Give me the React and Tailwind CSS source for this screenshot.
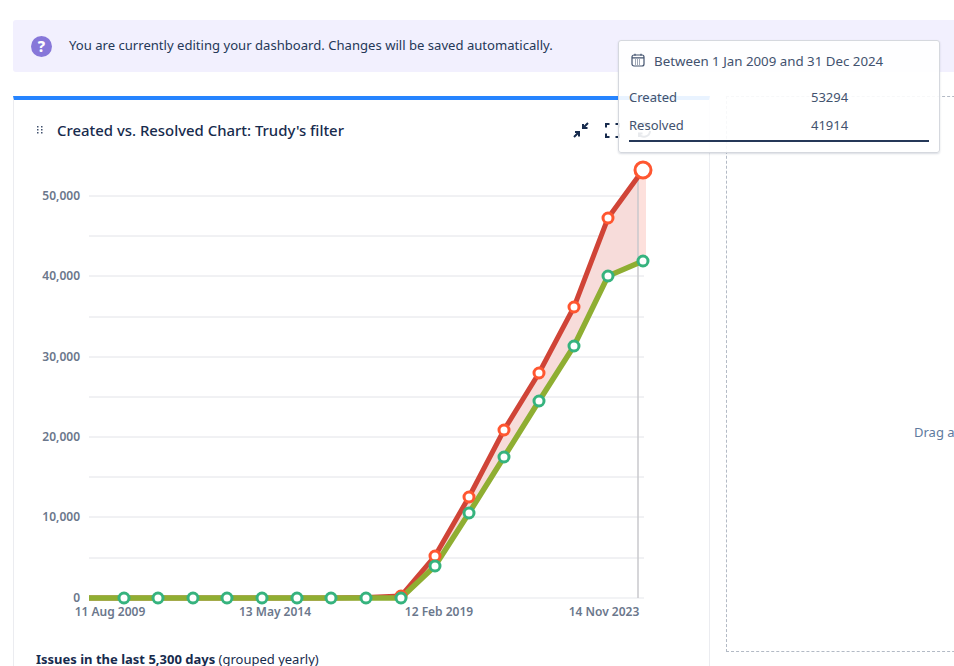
import React from 'react';

const FONT = 'font-["Noto_Sans","Open_Sans",sans-serif]';

const xs = [124, 158, 193, 227, 262, 297, 331, 366, 401, 435, 469, 504, 539, 574, 608, 643];
const created = [598, 598, 598, 598, 598, 598, 598, 597.5, 596, 556, 497, 430, 373, 307, 218, 170];
const resolved = [598, 598, 598, 598, 598, 598, 598, 598, 598, 566, 513, 457, 401, 346, 276, 261];

const toPoints = (ys) => ys.map((y, i) => `${xs[i]},${y}`).join(' ');

const gridY = [196, 236, 276, 317, 357, 397, 437, 477, 517, 558];
const yLabels = [
  { y: 196, text: '50,000' },
  { y: 276, text: '40,000' },
  { y: 357, text: '30,000' },
  { y: 437, text: '20,000' },
  { y: 517, text: '10,000' },
  { y: 598, text: '0' },
];
const xLabels = [
  { x: 110, text: '11 Aug 2009' },
  { x: 275, text: '13 May 2014' },
  { x: 439, text: '12 Feb 2019' },
  { x: 604, text: '14 Nov 2023' },
];

// Chart keeps the page's coordinates, shifted by the card's offset
function Chart() {
  return (
    <svg width="697" height="470" viewBox="13 160 697 470" className="block">
      {gridY.map((y) => (
        <line key={y} x1="89" x2="644" y1={y} y2={y} stroke="#e2e3e8" strokeWidth="1" />
      ))}
      <line x1="89" x2="644" y1="598" y2="598" stroke="#eeeff2" strokeWidth="1.5" />
      <polygon
        points={`${toPoints(created)} ${[...xs].reverse().map((x, i) => `${x},${[...resolved].reverse()[i]}`).join(' ')}`}
        fill="#f7dcda"
      />
      <rect x="638" y="172" width="8" height="90" fill="#fde0dc" />
      <line x1="638" x2="638" y1="178" y2="598" stroke="#c8c9cc" strokeWidth="1.5" />
      <polyline points={`89,598 ${toPoints(created)}`} fill="none" stroke="#d04437" strokeWidth="5" />
      <polyline points={`89,598 ${toPoints(resolved)}`} fill="none" stroke="#8fae32" strokeWidth="5.500" />
      {xs.map((x, i) => (i >= 8 && i < 15 ? (
        <circle key={x} cx={x} cy={created[i]} r="5" fill="#fff" stroke="#ff5630" strokeWidth="3" />
      ) : null))}
      <circle cx="643" cy="170" r="8" fill="#fff" stroke="#ff5630" strokeWidth="3" />
      {xs.map((x, i) => (
        <circle key={x} cx={x} cy={resolved[i]} r="5" fill="#fff" stroke="#36b37e" strokeWidth="3" />
      ))}
      {yLabels.map((l) => (
        <text key={l.y} x="80" y={l.y + 4} textAnchor="end" fontSize="12" fontWeight="600" fill="#6b778c">{l.text}</text>
      ))}
      {xLabels.map((l) => (
        <text key={l.x} x={l.x} y="616" textAnchor="middle" fontSize="12" fontWeight="600" fill="#6b778c">{l.text}</text>
      ))}
    </svg>
  );
}

function DragHandle() {
  return (
    <svg width="8" height="10" viewBox="0 0 8 10" className="shrink-0" fill="#42526e">
      {[1, 4, 7].map((y) => (
        <g key={y}>
          <rect x="1" y={y} width="1.5" height="1.5" />
          <rect x="5" y={y} width="1.5" height="1.5" />
        </g>
      ))}
    </svg>
  );
}

function CompressIcon() {
  return (
    <svg width="16" height="16" viewBox="0 0 16 16" fill="none" stroke="#172b4d" strokeWidth="2">
      <path d="M15 1l-5 5M10 2v4h4.500" />
      <path d="M1 15l5-5M2 10h4v4.500" />
    </svg>
  );
}

function ExpandIcon() {
  return (
    <svg width="15" height="15" viewBox="0 0 15 15" fill="none" stroke="#172b4d" strokeWidth="2">
      <path d="M1 4.500V1h3.500M10.500 1H14v3.500M14 10.500V14h-3.500M4.500 14H1v-3.500" />
    </svg>
  );
}

function RefreshIcon() {
  return (
    <svg width="16" height="16" viewBox="0 0 16 16" fill="none" stroke="#172b4d" strokeWidth="2">
      <path d="M14 9a6 6 0 0 1-11 3M2 7a6 6 0 0 1 11-3" />
      <path d="M13 1v3.500h-3.500M3 15v-3.500h3.500" />
    </svg>
  );
}

function CalendarIcon() {
  return (
    <svg width="14" height="14" viewBox="0 0 14 14" fill="none" stroke="#42526e" strokeWidth="1.2" className="-mt-[3px]">
      <rect x="1" y="2" width="12" height="11" rx="2" />
      <path d="M1 4.800h12M4 .8v2M10 .8v2" />
      <path d="M4 7h6M4 9h6M4 11h6" strokeWidth="1" strokeDasharray="1 1" />
    </svg>
  );
}

function HelpIcon() {
  return (
    <span className="flex h-[21px] w-[21px] shrink-0 items-center justify-center rounded-full bg-[#8777d9] text-[15px] font-extrabold leading-none text-white">
      ?
    </span>
  );
}

export default function App() {
  return (
    <div className={`relative h-[666px] w-[954px] overflow-hidden bg-white pl-[13px] pt-[20px] ${FONT}`}>
      {/* Edit banner */}
      <div className="flex h-[52px] items-center gap-[17px] rounded-l-[3px] bg-[#f2f0fe] pl-[18px]">
        <HelpIcon />
        <p className="text-[13.1px] text-[#253858]">
          You are currently editing your dashboard. Changes will be saved automatically.
        </p>
      </div>

      <div className="mt-[24px] flex items-start">
        {/* Gadget card */}
        <div className="h-[600px] w-[697px] shrink-0 border-x border-[#ebecf0] border-t-4 border-t-[#2684ff]">
          <div className="flex h-[60px] items-center pl-[22px] pr-[57px]">
            <DragHandle />
            <h2 className="ml-[13px] text-[14.9px] font-medium text-[#172b4d]">
              Created vs. Resolved Chart: Trudy's filter
            </h2>
            <div className="ml-auto flex items-center gap-[16px]">
              <CompressIcon />
              <ExpandIcon />
              <RefreshIcon />
            </div>
          </div>
          <div className="-ml-px">
            <Chart />
          </div>
          <p className="mt-[20px] pl-[22px] text-[13px] text-[#172b4d]">
            <b className="font-bold">Issues in the last 5,300 days</b> (grouped yearly)
          </p>
        </div>

        {/* Empty column */}
        <div className="ml-[16px] h-[556px] w-[400px] shrink-0 border border-dashed border-[#b3bac5] pl-[187px] pt-[322px]">
          <span className="text-[13px] text-[#5e7a9e]">Drag a</span>
        </div>
      </div>

      {/* Hover tooltip */}
      <div className="absolute left-[618px] top-[40px] h-[113px] w-[322px] rounded-[3px] border border-[#d5d8de] bg-white/90 px-[10px] pt-[11px] shadow-[0_1px_2px_rgba(9,30,66,0.15)]">
        <div className="flex items-center gap-[9px] pl-[2px] text-[13.3px] text-[#42526e]">
          <CalendarIcon />
          <span>Between 1 Jan 2009 and 31 Dec 2024</span>
        </div>
        <div className="mt-[12px] border-b-2 border-[#253858] text-[13px] text-[#42526e]">
          <div className="flex h-[28px] items-center">
            <span className="w-[182px]">Created</span>
            <span>53294</span>
          </div>
          <div className="flex h-[28px] items-center">
            <span className="w-[182px]">Resolved</span>
            <span>41914</span>
          </div>
        </div>
      </div>
    </div>
  );
}
